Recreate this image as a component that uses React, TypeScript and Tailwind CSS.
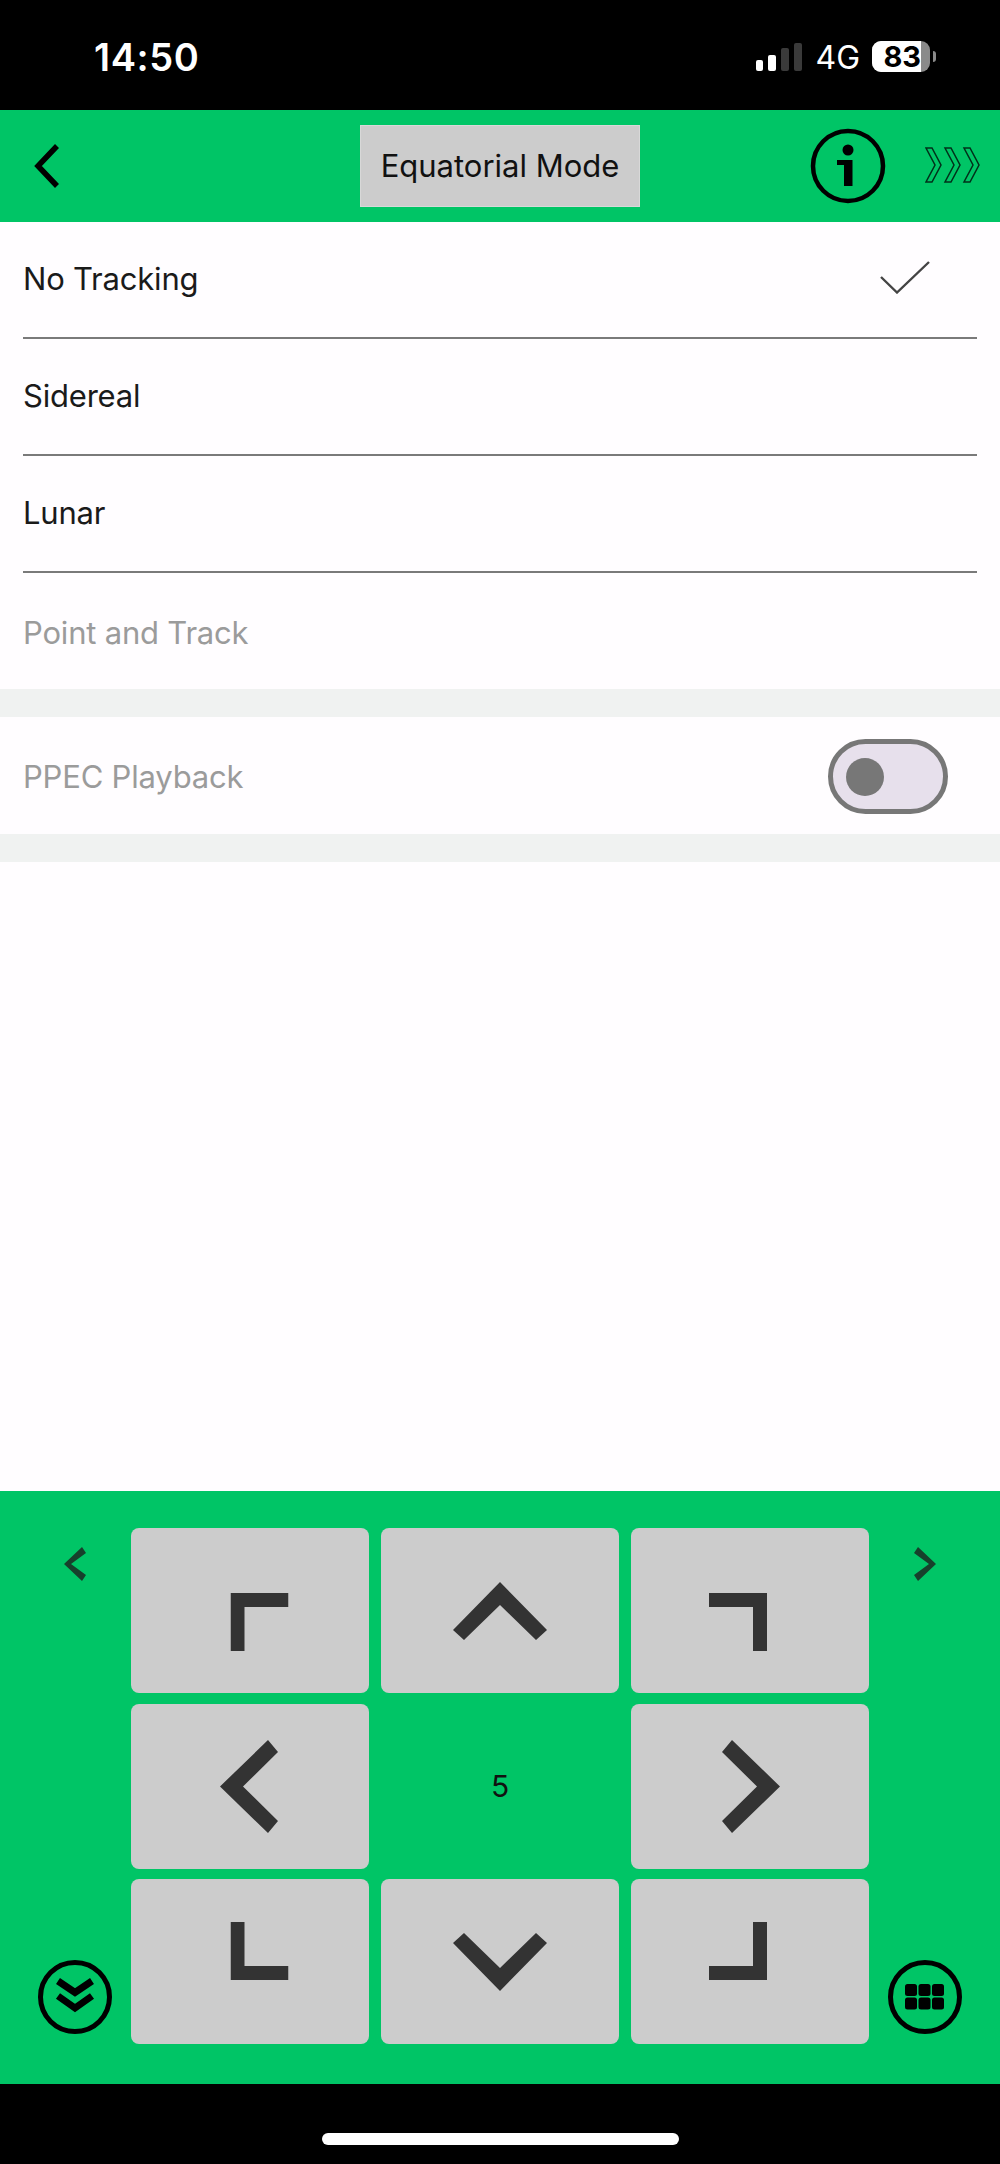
import React from "react";

const FONT = { fontFamily: "Inter, 'Liberation Sans', sans-serif" };
const GREEN = "bg-[#00c566]";

function Corner({ d, className }: { d: string; className: string }) {
  return (
    <svg width="58" height="58" viewBox="0 0 58 58" fill="none" className={className}>
      <path d={d} stroke="#333333" strokeWidth="14" />
    </svg>
  );
}

function Arrow({ w, h, points, className = "" }: { w: number; h: number; points: string; className?: string }) {
  return (
    <svg width={w} height={h} viewBox={`0 0 ${w} ${h}`} className={className}>
      <polygon points={points} fill="#333333" />
    </svg>
  );
}

function PadButton({ children }: { children: React.ReactNode }) {
  return <button className="flex items-center justify-center bg-[#cccccc] rounded-[8px] h-[165px]">{children}</button>;
}

function Row({ label, check }: { label: string; check?: boolean }) {
  return (
    <div className="h-[117px] mx-[23px] border-b-2 border-[#7a7a7a] flex items-center justify-between relative">
      <span className="text-[31px] tracking-[-0.2px] text-[#1a1a1a]">{label}</span>
      {check && (
        <svg width="50" height="33" viewBox="0 0 50 33" className="absolute right-[47px] top-[39px]" fill="none">
          <path d="M1 16 L17 31.5 L49 1" stroke="#444444" strokeWidth="2.4" />
        </svg>
      )}
    </div>
  );
}

export default function App() {
  return (
    <div className="w-[1000px] h-[2164px] flex flex-col bg-[#fffdff] overflow-hidden" style={FONT}>
      {/* status bar */}
      <div className="h-[110px] bg-black flex items-start justify-between text-white shrink-0">
        <span className="ml-[94px] mt-[35px] text-[38px] leading-[44px] font-semibold tracking-[0.6px]">14:50</span>
        <div className="flex items-start mt-[41px] mr-[64px]">
          <div className="flex items-end gap-[5px] h-[28px] mt-[2px]">
            <div className="w-[7px] h-[11px] rounded-[2px] bg-white" />
            <div className="w-[8px] h-[16px] rounded-[2px] bg-white" />
            <div className="w-[8px] h-[23px] rounded-[2px] bg-[#3a3a3a]" />
            <div className="w-[8px] h-[28px] rounded-[2px] bg-[#3a3a3a]" />
          </div>
          <span className="ml-[13px] mt-[1px] text-[32px] leading-[32px] font-normal">4G</span>
          <div className="ml-[12px] w-[58px] h-[31px] rounded-[9px] flex bg-[#8a8a8a]">
            <div className="w-[49px] h-[31px] rounded-l-[9px] bg-white text-black text-[29px] leading-[31px] font-bold text-right">83</div>
          </div>
          <div className="ml-[3px] mt-[10px] w-[3px] h-[11px] rounded-r-[3px] bg-[#8a8a8a]" />
        </div>
      </div>

      {/* header */}
      <div className={`h-[112px] ${GREEN} flex items-center relative shrink-0`}>
        <svg width="28" height="46" viewBox="0 0 28 46" className="absolute left-[33px] top-[33px]" fill="none">
          <path d="M24 3 L5 23 L24 43" stroke="#000000" strokeWidth="5.5" />
        </svg>
        <div className="mx-auto w-[280px] h-[82px] bg-[#cccccc] border border-[#d8d8d8] flex items-center justify-center text-[31px] text-[#111111]">
          Equatorial Mode
        </div>
        <svg width="76" height="76" viewBox="0 0 76 76" className="absolute left-[810px] top-[18px]" fill="none">
          <circle cx="38" cy="38" r="35" stroke="#000000" strokeWidth="4.5" />
          <circle cx="38" cy="22" r="5.5" fill="#000000" />
          <path d="M27 32 H42.5 V58 H34 V37 H27 Z" fill="#000000" />
        </svg>
        <svg width="56" height="36" viewBox="0 0 56 36" className="absolute left-[925px] top-[37px]" fill="none">
          {[0, 19, 38].map((x) => (
            <path key={x} d={`M${x + 1} 1 H${x + 7} L${x + 16} 18 L${x + 7} 35 H${x + 1} L${x + 10} 18 Z`} stroke="#00301a" strokeWidth="1.5" />
          ))}
        </svg>
      </div>

      {/* list */}
      <div className="h-[467px] flex flex-col shrink-0">
        <Row label="No Tracking" check />
        <Row label="Sidereal" />
        <Row label="Lunar" />
        <div className="h-[116px] px-[23px] flex items-center">
          <span className="text-[31px] tracking-[-0.2px] text-[#9b9b9b] mt-[4px]">Point and Track</span>
        </div>
      </div>
      <div className="h-[28px] bg-[#f0f2f1] shrink-0" />
      <div className="h-[117px] px-[23px] flex items-center justify-between shrink-0">
        <span className="text-[31px] tracking-[-0.2px] text-[#9b9b9b] mt-[3px]">PPEC Playback</span>
        <div className="w-[120px] h-[75px] mt-[2px] mr-[29px] rounded-full border-[5px] border-[#777777] bg-[#e7e0ec] flex items-center pl-[13px]">
          <div className="w-[38px] h-[38px] rounded-full bg-[#777777]" />
        </div>
      </div>
      <div className="h-[28px] bg-[#f0f2f1] shrink-0" />
      <div className="flex-1" />

      {/* pad */}
      <div className={`h-[593px] ${GREEN} shrink-0 flex pt-[37px]`}>
        <div className="w-[131px] h-[507px] pl-[18px] flex flex-col justify-between items-center">
          <svg width="22" height="34" viewBox="0 0 22 34" className="mt-[19px]">
            <polygon points="0,17 18,0 22,6 7,17 22,28 18,34" fill="#17402c" />
          </svg>
          <svg width="76" height="76" viewBox="0 0 76 76" fill="none">
            <circle cx="38" cy="38" r="34.5" stroke="#000000" strokeWidth="5" />
            <path d="M21 22 L38 33.5 L55 22" stroke="#000000" strokeWidth="7" />
            <path d="M21 37 L38 49 L55 37" stroke="#000000" strokeWidth="7" />
          </svg>
        </div>
        <div className="w-[738px] grid grid-cols-3 gap-x-[12px] gap-y-[10.5px] content-start">
          <PadButton>
            <Corner d="M7 58 V7 H58" className="translate-x-[9.5px] translate-y-[11px]" />
          </PadButton>
          <PadButton>
            <Arrow w={94} h={58} points="47,0 94,48 83,58 47,23 11,58 0,48" />
          </PadButton>
          <PadButton>
            <Corner d="M0 7 H51 V58" className="-translate-x-[12px] translate-y-[11px]" />
          </PadButton>
          <PadButton>
            <Arrow w={58} h={93} points="0,46.5 48,0 58,12 23,46.5 58,81 48,93" className="-translate-x-[1px]" />
          </PadButton>
          <div className="flex items-center justify-center text-[30px] text-[#111111]">5</div>
          <PadButton>
            <Arrow w={58} h={93} points="58,46.5 10,0 0,12 35,46.5 0,81 10,93" className="translate-x-[1px]" />
          </PadButton>
          <PadButton>
            <Corner d="M7 0 V51 H58" className="translate-x-[9.5px] -translate-y-[11px]" />
          </PadButton>
          <PadButton>
            <Arrow w={94} h={58} points="47,58 94,10 83,0 47,35 11,0 0,10" />
          </PadButton>
          <PadButton>
            <Corner d="M0 51 H51 V0" className="-translate-x-[12px] -translate-y-[11px]" />
          </PadButton>
        </div>
        <div className="w-[131px] h-[507px] pr-[19px] flex flex-col justify-between items-center">
          <svg width="22" height="34" viewBox="0 0 22 34" className="mt-[19px]">
            <polygon points="22,17 4,0 0,6 15,17 0,28 4,34" fill="#17402c" />
          </svg>
          <svg width="76" height="76" viewBox="0 0 76 76" fill="none">
            <circle cx="38" cy="38" r="34.5" stroke="#000000" strokeWidth="5" />
            {[18, 31.5, 45].map((x) => (
              <React.Fragment key={x}>
                <rect x={x} y="25" width="12" height="12" rx="2.5" fill="#000000" />
                <rect x={x} y="38.5" width="12" height="12" rx="2.5" fill="#000000" />
              </React.Fragment>
            ))}
          </svg>
        </div>
      </div>

      {/* home indicator */}
      <div className="h-[80px] bg-black shrink-0 flex justify-center pt-[49px]">
        <div className="w-[357px] h-[12px] rounded-full bg-white" />
      </div>
    </div>
  );
}
